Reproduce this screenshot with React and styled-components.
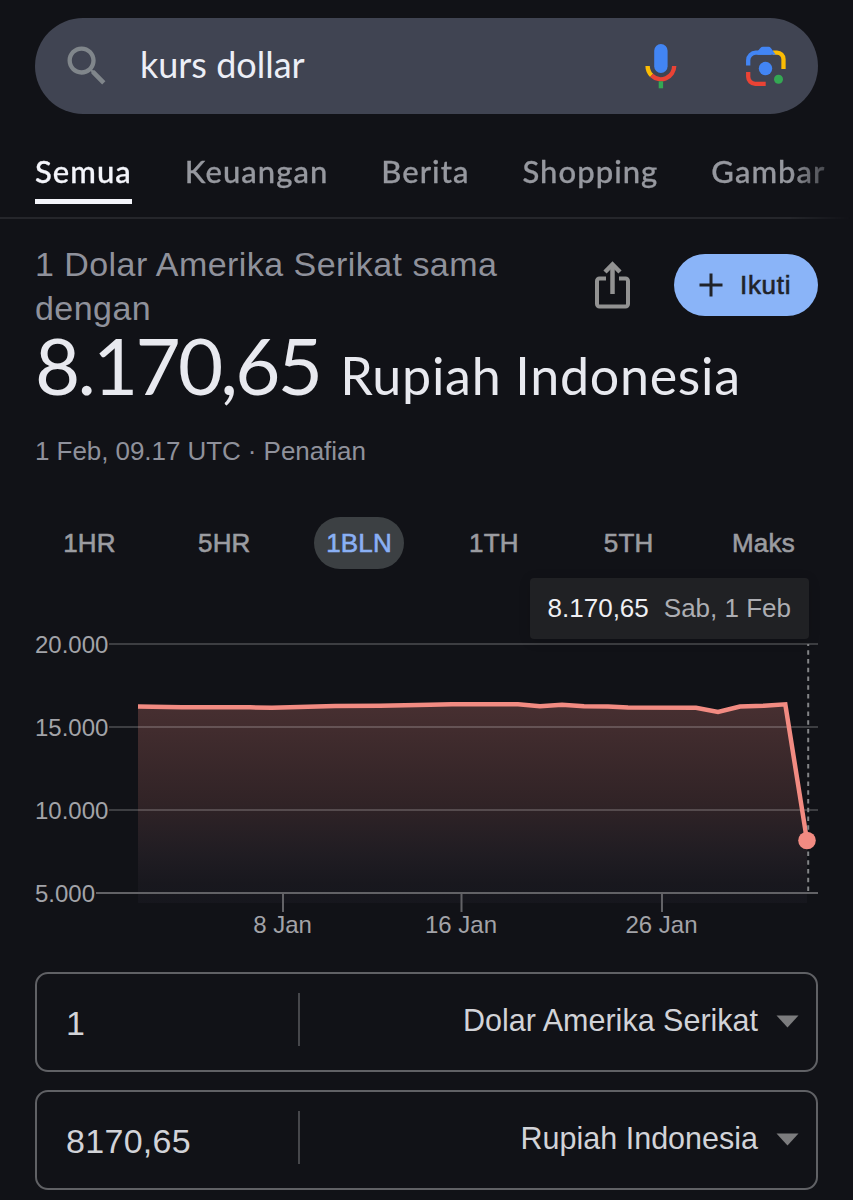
import React, { useState } from 'react';
import styled, { createGlobalStyle } from 'styled-components';

const GlobalStyle = createGlobalStyle`
  * {
    box-sizing: border-box;
  }

  body {
    margin: 0;
    background: #111217;
    font-family: 'Liberation Sans', Arial, sans-serif;
  }
`;

const Page = styled.main`
  width: 853px;
  height: 1200px;
  padding-top: 18px;
  overflow: hidden;
  background: #111217;
`;

const SearchBar = styled.div`
  display: flex;
  align-items: center;
  height: 96px;
  margin: 0 35px;
  padding: 0 31px 0 26px;
  border-radius: 48px;
  background: #404452;
`;

const Query = styled.span`
  flex: 1;
  margin-left: 27px;
  padding-bottom: 5px;
  font-family: Lato, sans-serif;
  font-size: 36px;
  line-height: 44px;
  color: #eceef6;
`;

const SearchActions = styled.div`
  display: flex;
  align-items: center;
  gap: 67px;
`;

const Tabs = styled.nav`
  display: flex;
  gap: 53px;
  height: 105px;
  padding: 34px 0 0 35px;
  border-bottom: 2px solid #25262b;
  overflow: hidden;
  white-space: nowrap;
  mask-image: linear-gradient(to right, #000 790px, transparent 850px);
`;

const Tab = styled.a`
  height: 56px;
  font-family: Lato, sans-serif;
  font-size: 31px;
  font-weight: 500;
  line-height: 46px;
  letter-spacing: 1.04px;
  -webkit-text-stroke: 0.3px currentColor;
  color: ${props => (props.$active ? '#f4f5fb' : '#96989f')};
  border-bottom: ${props => (props.$active ? '5px solid #f4f5fb' : 'none')};
`;

const Summary = styled.section`
  padding: 23px 35px 0;
`;

const SummaryTop = styled.div`
  display: flex;
  justify-content: space-between;
  height: 88px;
`;

const Subtitle = styled.div`
  width: 500px;
  font-size: 34px;
  line-height: 44px;
  letter-spacing: 0.45px;
  color: #8f919b;
`;

const SummaryActions = styled.div`
  display: flex;
  align-items: center;
  gap: 44px;
  height: 62px;
  margin-top: 12px;
`;

const FollowButton = styled.button`
  display: flex;
  align-items: center;
  gap: 17px;
  width: 144px;
  height: 62px;
  padding: 0 0 0 25px;
  border: none;
  border-radius: 31px;
  background: #8ab4f8;
  color: #202329;
  font-family: inherit;
  font-size: 26px;
  letter-spacing: 0.7px;
  -webkit-text-stroke: 0.6px currentColor;
`;

const Rate = styled.div`
  display: flex;
  align-items: baseline;
  height: 68px;
  padding-top: 1px;
  font-family: Lato, sans-serif;
  line-height: 68px;
  white-space: nowrap;
  color: #e8e9ef;
`;

const Amount = styled.span`
  font-size: 78px;
  letter-spacing: -2.8px;
`;

const Currency = styled.span`
  margin-left: 20px;
  font-size: 52px;
  letter-spacing: 0.7px;
`;

const Meta = styled.div`
  margin-top: 33px;
  font-size: 26px;
  line-height: 40px;
  letter-spacing: -0.06px;
  color: #8f919b;
`;

const Ranges = styled.div`
  display: grid;
  grid-template-columns: repeat(6, 134.8px);
  justify-content: center;
  justify-items: center;
  margin-top: 46px;
`;

const Range = styled.button`
  width: 90px;
  height: 52px;
  padding: 0;
  border: none;
  border-radius: 26px;
  background: ${props => (props.$active ? '#3c4043' : 'transparent')};
  color: ${props => (props.$active ? '#8ab0f4' : '#9b9ca1')};
  font-family: inherit;
  font-size: 26px;
  letter-spacing: 0.2px;
  -webkit-text-stroke: 0.6px currentColor;
`;

const ChartArea = styled.section`
  position: relative;
  height: 403px;
`;

const ChartSvg = styled.svg`
  display: block;
  font-family: 'Liberation Sans', Arial, sans-serif;
  font-size: 24px;
`;

const Tooltip = styled.div`
  position: absolute;
  top: 9px;
  right: 44px;
  display: flex;
  align-items: center;
  gap: 15px;
  height: 61px;
  padding: 0 18px;
  border-radius: 4px;
  background: #202124;
  box-shadow: 0 2px 12px rgba(0, 0, 0, 0.15);
  font-size: 26px;
  color: #adaeb3;
  white-space: nowrap;
`;

const TooltipValue = styled.span`
  color: #eff0f4;
`;

const Converter = styled.section`
  display: flex;
  flex-direction: column;
  gap: 18px;
  padding: 0 35px;
`;

const Field = styled.div`
  display: flex;
  align-items: center;
  height: 100px;
  border: 2px solid #606165;
  border-radius: 13px;
  color: #d2d3d8;
`;

const FieldValue = styled.div`
  width: 261px;
  padding: 2px 0 0 29px;
  font-size: 34px;
  letter-spacing: 0.3px;
`;

const FieldDivider = styled.div`
  width: 2px;
  height: 53px;
  margin-bottom: 5px;
  background: #46474b;
`;

const FieldUnit = styled.div`
  flex: 1;
  display: flex;
  align-items: center;
  justify-content: flex-end;
  gap: 18px;
  padding: 0 17px 4px 0;
  font-size: 30.5px;
`;

const CaretIcon = styled.svg`
  margin-top: 2px;
`;

const tabs = [
  { label: 'Semua', active: true },
  { label: 'Keuangan' },
  { label: 'Berita' },
  { label: 'Shopping' },
  { label: 'Gambar' },
];

const ranges = ['1HR', '5HR', '1BLN', '1TH', '5TH', 'Maks'];

// y positions are relative to the top of the chart
const gridLines = [
  { label: '20.000', y: 75 },
  { label: '15.000', y: 158 },
  { label: '10.000', y: 241 },
];

const ticks = [
  { label: '8 Jan', x: 283 },
  { label: '16 Jan', x: 461.5 },
  { label: '26 Jan', x: 662 },
];

const points = [
  [138, 137.5], [182, 138.3], [250, 138.3], [272, 138.8], [335, 137],
  [380, 136.8], [430, 135.8], [452, 135.2], [518, 135.3], [540, 137.2],
  [562, 135.8], [584, 137.2], [608, 137.5], [628, 138.5], [696, 138.8],
  [718, 143], [740, 137.5], [764, 136.7], [785.3, 135.3], [807, 271.5],
];

const linePath = 'M' + points.map(p => p.join(' ')).join(' L');

const SearchIcon = () => (
  <svg width="52" height="52" viewBox="0 0 24 24" fill="#80868b">
    <path d="M15.5 14h-.79l-.28-.27C15.41 12.59 16 11.11 16 9.5 16 5.91 13.09 3 9.5 3S3 5.91 3 9.5 5.91 16 9.5 16c1.61 0 3.09-.59 4.23-1.57l.27.28v.79l5 4.99L20.49 19l-4.99-5zm-6 0C7.01 14 5 11.99 5 9.5S7.01 5 9.5 5 14 7.01 14 9.5 11.99 14 9.5 14z" />
  </svg>
);

const MicIcon = () => (
  <svg width="34" height="46" viewBox="0 0 34 46" fill="none" strokeWidth="4.4">
    <rect x="10.2" y="1" width="13.4" height="29" rx="6.7" fill="#4285f4" />
    <path d="M3.6 23a13.3 13.3 0 0 0 4 9.4" stroke="#fbbc04" />
    <path d="M7.6 32.4A13.3 13.3 0 0 0 30.2 23" stroke="#ea4335" />
    <path d="M16.9 38.3v7" stroke="#34a853" />
  </svg>
);

const LensIcon = () => (
  <svg width="42" height="42" viewBox="0 0 42 42" fill="none" strokeWidth="4.3">
    <path d="M28 7.7h4a6.500 6.500 0 0 1 6.500 6.500V24" stroke="#fbbc04" />
    <path d="M3.2 20.500v-5.300a7.500 7.500 0 0 1 7.500-7.500H26" stroke="#4285f4" />
    <path d="M12.500 6.500l2.600-3.300Q16.500 1.800 18 1.800h5.500q1.500 0 2.500 1.400l4.800 6.600H12.500z" fill="#4285f4" />
    <path d="M3.2 27v4.800a7 7 0 0 0 7 7h10.500" stroke="#ea4335" />
    <circle cx="20.500" cy="23.500" r="6.700" fill="#4285f4" />
    <circle cx="33.500" cy="34.300" r="4.500" fill="#34a853" />
  </svg>
);

const ShareIcon = () => (
  <svg width="36" height="50" viewBox="0 0 36 50" fill="none" stroke="#929292" strokeWidth="4">
    <path d="M12 18.5H5.500a2.500 2.500 0 0 0-2.500 2.500V44A2.500 2.500 0 0 0 5.500 46.500H31.500A2.500 2.500 0 0 0 34 44V21A2.500 2.500 0 0 0 31.500 18.500H25" />
    <path d="M18.5 34V5" strokeWidth="4.5" />
    <path d="M11 12l7.500-7.500 7.500 7.500" strokeWidth="4.5" />
  </svg>
);

const PlusIcon = () => (
  <svg width="24" height="24" viewBox="0 0 24 24" stroke="#202329" strokeWidth="3">
    <path d="M12 0.5v23M0.5 12h23" />
  </svg>
);

const Caret = () => (
  <CaretIcon width="23" height="13" viewBox="0 0 23 13">
    <path d="M0.5 0.5h22l-11 12z" fill="#7c7c7e" />
  </CaretIcon>
);

const Chart = () => (
  <ChartArea>
    <ChartSvg width="853" height="403" viewBox="0 0 853 403">
      <defs>
        <linearGradient id="area" gradientUnits="userSpaceOnUse" x1="0" y1="136" x2="0" y2="334">
          <stop offset="0" stopColor="#f28b82" stopOpacity="0.24" />
          <stop offset="0.5" stopColor="#f28b82" stopOpacity="0.14" />
          <stop offset="0.9" stopColor="#c8a0c0" stopOpacity="0.04" />
          <stop offset="1" stopColor="#c0b0f0" stopOpacity="0.03" />
        </linearGradient>
      </defs>
      <path d={`${linePath} V334 H138 Z`} fill="url(#area)" />
      {gridLines.map(line => (
        <g key={line.label}>
          <path d={`M109 ${line.y}H818`} stroke="#ffffff" strokeOpacity="0.19" strokeWidth="2" />
          <text x="35" y={line.y + 8.7} fill="#a2a3a8">{line.label}</text>
        </g>
      ))}
      <path d="M96 324H818" stroke="#626266" strokeWidth="2" />
      <text x="35" y="333" fill="#a2a3a8">5.000</text>
      {ticks.map(tick => (
        <g key={tick.label}>
          <path d={`M${tick.x} 324v19`} stroke="#626266" strokeWidth="2" />
          <text x={tick.x - 0.5} y="363.5" textAnchor="middle" fill="#a2a3a8">{tick.label}</text>
        </g>
      ))}
      <path d={linePath} fill="none" stroke="#f28b82" strokeWidth="4.5" />
      <path d="M808.2 75V323" stroke="#838487" strokeWidth="2" strokeDasharray="4.5 4.25" strokeDashoffset="2.5" />
      <circle cx="807" cy="271.5" r="8.8" fill="#f28b82" />
    </ChartSvg>
    <Tooltip>
      <TooltipValue>8.170,65</TooltipValue>
      <span>Sab, 1 Feb</span>
    </Tooltip>
  </ChartArea>
);

const CurrencyField = ({ value, unit }) => (
  <Field>
    <FieldValue>{value}</FieldValue>
    <FieldDivider />
    <FieldUnit>
      {unit}
      <Caret />
    </FieldUnit>
  </Field>
);

const App = () => {
  const [range, setRange] = useState('1BLN');

  return (
    <Page>
      <GlobalStyle />
      <SearchBar>
        <SearchIcon />
        <Query>kurs dollar</Query>
        <SearchActions>
          <MicIcon />
          <LensIcon />
        </SearchActions>
      </SearchBar>

      <Tabs>
        {tabs.map(tab => (
          <Tab key={tab.label} $active={tab.active}>{tab.label}</Tab>
        ))}
      </Tabs>

      <Summary>
        <SummaryTop>
          <Subtitle>1 Dolar Amerika Serikat sama dengan</Subtitle>
          <SummaryActions>
            <ShareIcon />
            <FollowButton>
              <PlusIcon />
              Ikuti
            </FollowButton>
          </SummaryActions>
        </SummaryTop>
        <Rate>
          <Amount>8.170,65</Amount>
          <Currency>Rupiah Indonesia</Currency>
        </Rate>
        <Meta>1 Feb, 09.17 UTC · Penafian</Meta>
      </Summary>

      <Ranges>
        {ranges.map(name => (
          <Range key={name} $active={name === range} onClick={() => setRange(name)}>{name}</Range>
        ))}
      </Ranges>

      <Chart />

      <Converter>
        <CurrencyField value="1" unit="Dolar Amerika Serikat" />
        <CurrencyField value="8170,65" unit="Rupiah Indonesia" />
      </Converter>
    </Page>
  );
};

export default App;
